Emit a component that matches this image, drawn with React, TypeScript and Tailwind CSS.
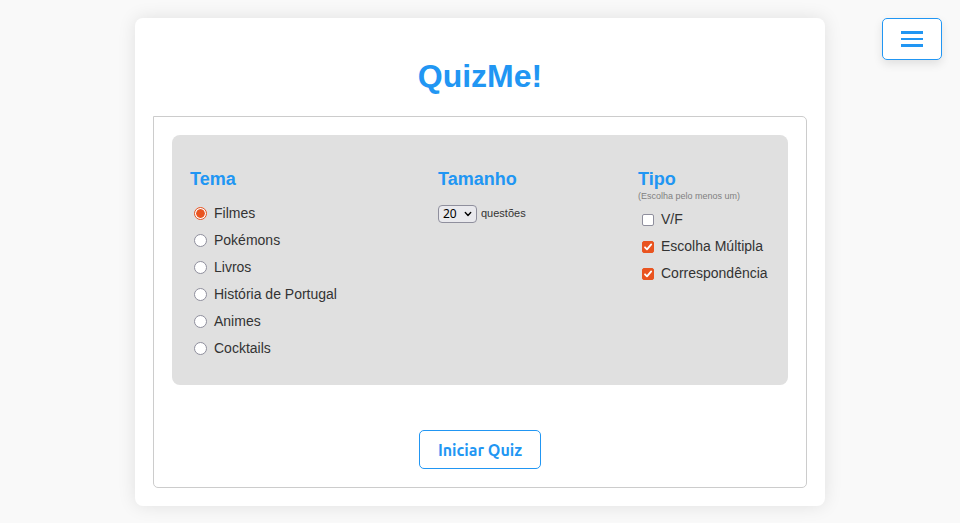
import { useState } from "react";

const themes = ["Filmes", "Pokémons", "Livros", "História de Portugal", "Animes", "Cocktails"];
const kinds = ["V/F", "Escolha Múltipla", "Correspondência"];
const sizes = [10, 20, 30];

function ThemeOption({ name, checked, onPick }: { name: string; checked: boolean; onPick: () => void }) {
  return (
    <label className="flex h-[27px] items-center gap-[7px] pl-1 whitespace-nowrap">
      <input
        type="radio"
        name="theme"
        checked={checked}
        onChange={onPick}
        className="size-[13px] shrink-0 appearance-none rounded-full border border-[#8f8f9d] bg-white checked:border-[#e95420] checked:bg-[#e95420] checked:bg-clip-content checked:p-px checked:shadow-[inset_0_0_0_1px_#fff]"
      />
      <span>{name}</span>
    </label>
  );
}

function KindOption({ name, checked, onToggle }: { name: string; checked: boolean; onToggle: () => void }) {
  return (
    <label className="flex h-[27px] items-center gap-[7px] pl-1 whitespace-nowrap">
      <span className="relative size-3 shrink-0">
        <input
          type="checkbox"
          checked={checked}
          onChange={onToggle}
          className="peer block size-3 appearance-none rounded-xs border border-[#8f8f9d] bg-white checked:border-[#e95420] checked:bg-[#e95420]"
        />
        <svg
          viewBox="0 0 12 12"
          className="pointer-events-none absolute inset-0 hidden size-3 peer-checked:block"
          fill="none"
          stroke="white"
          strokeWidth="1.8"
          strokeLinecap="round"
          strokeLinejoin="round"
          aria-hidden="true"
        >
          <path d="M3 6.3 5 8.4 9.2 3.4" />
        </svg>
      </span>
      <span>{name}</span>
    </label>
  );
}

export default function App() {
  const [theme, setTheme] = useState("Filmes");
  const [size, setSize] = useState(20);
  const [picked, setPicked] = useState(["Escolha Múltipla", "Correspondência"]);

  const toggle = (kind: string) =>
    setPicked(picked.includes(kind) ? picked.filter((k) => k !== kind) : [...picked, kind]);

  return (
    <div className="min-h-screen bg-[#f9f9f9] px-4 pt-[18px] pb-[17px] font-['Liberation_Sans',Arial,sans-serif] text-[14px] text-[#333]">
      <button
        type="button"
        aria-label="Menu"
        className="fixed top-[18px] right-[18px] flex h-[42px] w-[60px] flex-col items-center justify-center gap-1 rounded-[5px] border border-[#2196f3] bg-white shadow-[0_4px_10px_rgba(0,0,0,0.1)]"
      >
        <span className="h-[3px] w-[22px] bg-[#2196f3]" />
        <span className="h-[2px] w-[22px] bg-[#2196f3]" />
        <span className="h-[3px] w-[22px] bg-[#2196f3]" />
      </button>

      <main className="mx-auto max-w-[690px] rounded-[8px] bg-white p-[18px] shadow-[0_0_18px_rgba(0,0,0,0.1)]">
        <h1 className="pt-[22px] pb-[22px] text-center text-[32px] leading-9 font-bold text-[#2196f3]">QuizMe!</h1>

        <form
          onSubmit={(e) => e.preventDefault()}
          className="rounded-[5px] rounded-tl-none border border-[#ccc] p-[18px]"
        >
          <div className="flex flex-wrap justify-between gap-y-4 rounded-[8px] bg-[#e0e0e0] px-[18px] pt-[33px] pb-[23px]">
            <section className="w-[149px]">
              <h2 className="mb-[10px] text-[18px] leading-[22px] font-bold text-[#2196f3]">Tema</h2>
              {themes.map((name) => (
                <ThemeOption key={name} name={name} checked={theme === name} onPick={() => setTheme(name)} />
              ))}
            </section>

            <section className="w-[101px]">
              <h2 className="mb-[15px] text-[18px] leading-[22px] font-bold text-[#2196f3]">Tamanho</h2>
              <div className="flex items-start gap-1 text-[11px] leading-4">
                <span className="relative">
                  <select
                    id="size"
                    value={size}
                    onChange={(e) => setSize(Number(e.target.value))}
                    className="block h-[18px] w-[39px] appearance-none rounded-[4px] border border-[#8f8f9d] bg-[#e9e9ed] pl-1 font-['Noto_Sans',sans-serif] text-[12px] leading-4 text-black"
                  >
                    {sizes.map((n) => (
                      <option key={n} value={n}>
                        {n}
                      </option>
                    ))}
                  </select>
                  <svg
                    viewBox="0 0 8 6"
                    className="pointer-events-none absolute top-[6px] right-[5px] h-[6px] w-2"
                    fill="none"
                    stroke="black"
                    strokeWidth="1.4"
                    strokeLinecap="round"
                    strokeLinejoin="round"
                    aria-hidden="true"
                  >
                    <path d="M1.3 1.6 4 4.4 6.7 1.6" />
                  </svg>
                </span>
                <label htmlFor="size">questões</label>
              </div>
            </section>

            <section className="w-[132px]">
              <h2 className="text-[18px] leading-[22px] font-bold text-[#2196f3]">Tipo</h2>
              <p className="mb-[3px] text-[9px] leading-[13px] text-[#808080]">(Escolha pelo menos um)</p>
              {kinds.map((name) => (
                <KindOption key={name} name={name} checked={picked.includes(name)} onToggle={() => toggle(name)} />
              ))}
            </section>
          </div>

          <div className="mt-[45px] flex justify-center">
            <button
              type="submit"
              className="h-[39px] rounded-[5px] border border-[#2196f3] bg-white px-[18px] font-['Ubuntu','Noto_Sans',sans-serif] text-[16px] font-semibold text-[#2196f3]"
            >
              Iniciar Quiz
            </button>
          </div>
        </form>
      </main>
    </div>
  );
}
